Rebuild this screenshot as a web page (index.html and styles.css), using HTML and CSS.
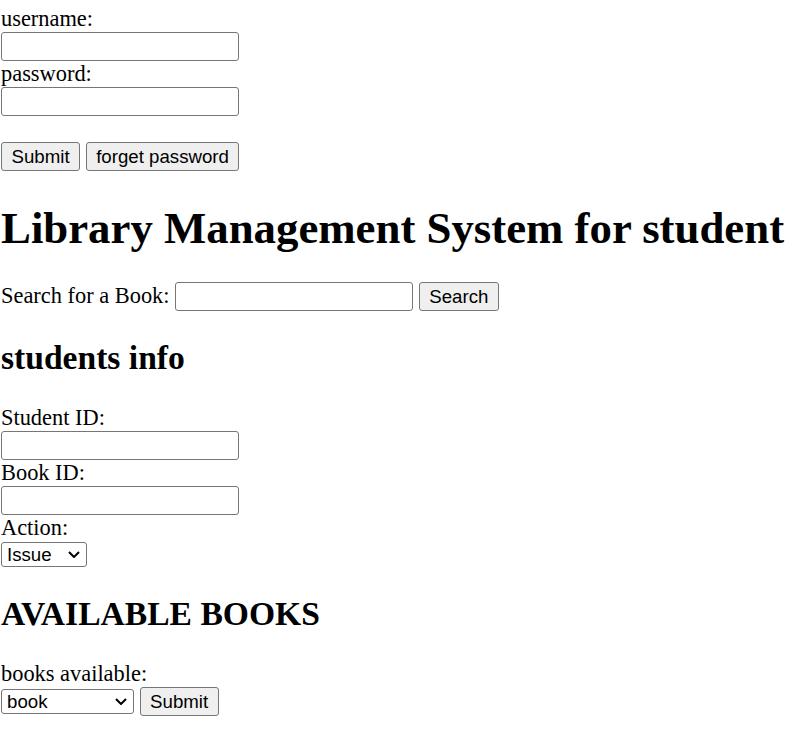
FILE: index.html
```html
<!DOCTYPE html>
<html>
<head>
<meta charset="utf-8">
<title>Library Management System</title>
<link rel="stylesheet" href="styles.css">
</head>
<body>
<form class="login">
  <label class="lbl">username:</label><br>
  <input class="field" type="text"><br>
  <label class="lbl">password:</label><br>
  <input class="field" type="password"><br><br>
  <button class="btn" type="button">Submit</button> <button class="btn" type="button">forget password</button>
</form>
<h1 class="title">Library Management System for student</h1>
<form class="search">
  Search for a Book: <input class="field" type="text"> <button class="btn" type="button">Search</button>
</form>
<h2 class="heading">students info</h2>
<form class="info">
  Student ID:<br>
  <input class="field" type="text"><br>
  Book ID:<br>
  <input class="field" type="text"><br>
  Action:<br>
  <span class="selwrap"><select class="sel sel-action"><option>Issue</option><option>Return</option></select><svg class="chev" width="12" height="7" viewBox="0 0 12 7"><path d="M1 1 L6 6 L11 1" fill="none" stroke="#000" stroke-width="2"/></svg></span>
</form>
<h2 class="heading">AVAILABLE BOOKS</h2>
<form class="books">
  books available:<br>
  <span class="selwrap"><select class="sel sel-book"><option>book</option></select><svg class="chev" width="12" height="7" viewBox="0 0 12 7"><path d="M1 1 L6 6 L11 1" fill="none" stroke="#000" stroke-width="2"/></svg></span> <button class="btn" type="button">Submit</button>
</form>
</body>
</html>
```
FILE: styles.css
```css
html {
  background: #fff;
}
body {
  margin: 0;
  padding: 6px 0 0 1px;
  font-family: "Liberation Serif", "Times New Roman", serif;
  font-size: 22.4px;
  color: #000;
}
form {
  margin: 0;
}
.lbl {
  font: inherit;
}
.field {
  box-sizing: border-box;
  width: 238px;
  height: 29px;
  margin: 0;
  padding: 1px 3px;
  border: 1px solid #767676;
  border-radius: 3px;
  background: #fff;
  font-family: "Liberation Sans", Arial, sans-serif;
  font-size: 18.67px;
  vertical-align: baseline;
}
.btn {
  box-sizing: border-box;
  height: 29px;
  margin: 0;
  padding: 1px 9.5px;
  border: 1px solid #767676;
  border-radius: 3px;
  background: #efefef;
  color: #000;
  font-family: "Liberation Sans", Arial, sans-serif;
  font-size: 18.67px;
}
.title {
  font-size: 44.8px;
  font-weight: bold;
  margin: 31px 0 28px;
}
.heading {
  font-size: 33.6px;
  font-weight: bold;
  margin: 28px 0;
}
.selwrap {
  position: relative;
  display: inline-block;
}
.sel {
  box-sizing: border-box;
  height: 25px;
  margin: 0;
  padding: 0 20px 0 5px;
  border: 1px solid #767676;
  border-radius: 3px;
  background: #fff;
  color: #000;
  font-family: "Liberation Sans", Arial, sans-serif;
  font-size: 18.67px;
  -webkit-appearance: none;
  appearance: none;
}
.chev {
  position: absolute;
  right: 7px;
  top: 50%;
  margin-top: -3px;
  pointer-events: none;
}
.sel-action {
  width: 86px;
}
.sel-book {
  width: 133px;
}
```
